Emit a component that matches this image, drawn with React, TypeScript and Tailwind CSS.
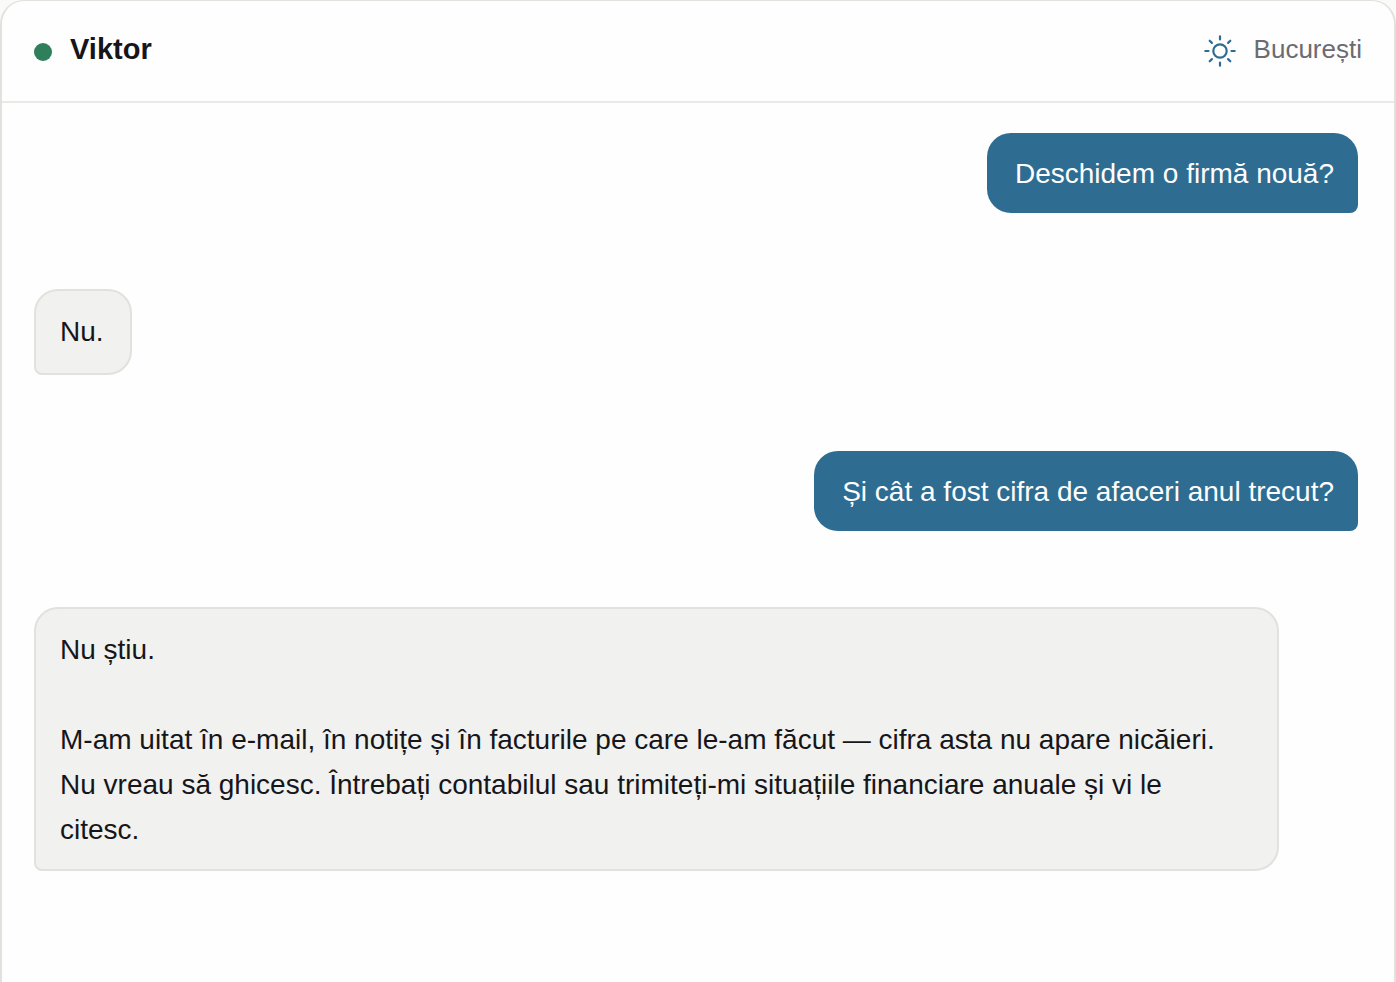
type Message = { from: 'user' | 'viktor'; text: string };

const messages: Message[] = [
  { from: 'user', text: 'Deschidem o firmă nouă?' },
  { from: 'viktor', text: 'Nu.' },
  { from: 'user', text: 'Și cât a fost cifra de afaceri anul trecut?' },
  {
    from: 'viktor',
    text:
      'Nu știu.\n\nM-am uitat în e-mail, în notițe și în facturile pe care le-am făcut — cifra asta nu apare nicăieri. Nu vreau să ghicesc. Întrebați contabilul sau trimiteți-mi situațiile financiare anuale și vi le\ncitesc.',
  },
];

function SunIcon() {
  return (
    <svg
      aria-hidden="true"
      viewBox="0 0 32 32"
      className="mt-1 size-8 text-[#2e6c91]"
      fill="none"
      stroke="currentColor"
      strokeWidth="2.2"
      strokeLinecap="round"
    >
      <circle cx="16" cy="16" r="6.7" />
      <path d="M16 1.3v3.2M16 27.5v3.2M1.3 16h3.2M27.5 16h3.2M5.7 5.7l2.2 2.2M24.1 24.1l2.2 2.2M5.7 26.3l2.2-2.2M24.1 7.9l2.2-2.2" />
    </svg>
  );
}

function Bubble({ message }: { message: Message }) {
  const base = 'max-w-[94%] whitespace-pre-line rounded-3xl pr-6 pt-[18px] pb-[17px] text-[28px] leading-[45px]';
  const width = message.text.includes('\n') ? 'w-full' : 'w-auto';
  return message.from === 'user' ? (
    <li className={`${base} ${width} self-end rounded-br-lg bg-[#2e6c91] pl-7 text-[#fefefe]`}>{message.text}</li>
  ) : (
    <li
      className={`${base} ${width} min-h-[86px] min-w-[98px] self-start rounded-bl-lg border-2 border-[#e1e1dd] bg-[#f1f1ef] pl-6 text-[#16161a]`}
    >
      {message.text}
    </li>
  );
}

export default function App() {
  return (
    <div className="flex min-h-screen flex-col bg-[#fafaf9] font-['Liberation_Sans',Arial,sans-serif]">
      <main className="flex grow flex-col rounded-t-3xl border-x-2 border-t border-[#e1e1dd] bg-[#fefefe]">
        <header className="flex items-center justify-between border-b-2 border-[#e9e9e6] px-8 pt-7 pb-8">
          <div className="flex items-center gap-[18px]">
            <span className="mt-1.5 size-[18px] rounded-full bg-[#2f7f5c]" />
            <h1 className="text-[29px] leading-[40px] font-bold text-[#16161a]">Viktor</h1>
          </div>
          <div className="flex items-center gap-[18px]">
            <SunIcon />
            <span className="text-[26px] leading-[40px] text-[#6c6c70]">București</span>
          </div>
        </header>
        <ul className="flex flex-col gap-[76px] pt-[30px] pr-9 pb-8 pl-8">
          {messages.map((message) => (
            <Bubble key={message.text} message={message} />
          ))}
        </ul>
      </main>
    </div>
  );
}
